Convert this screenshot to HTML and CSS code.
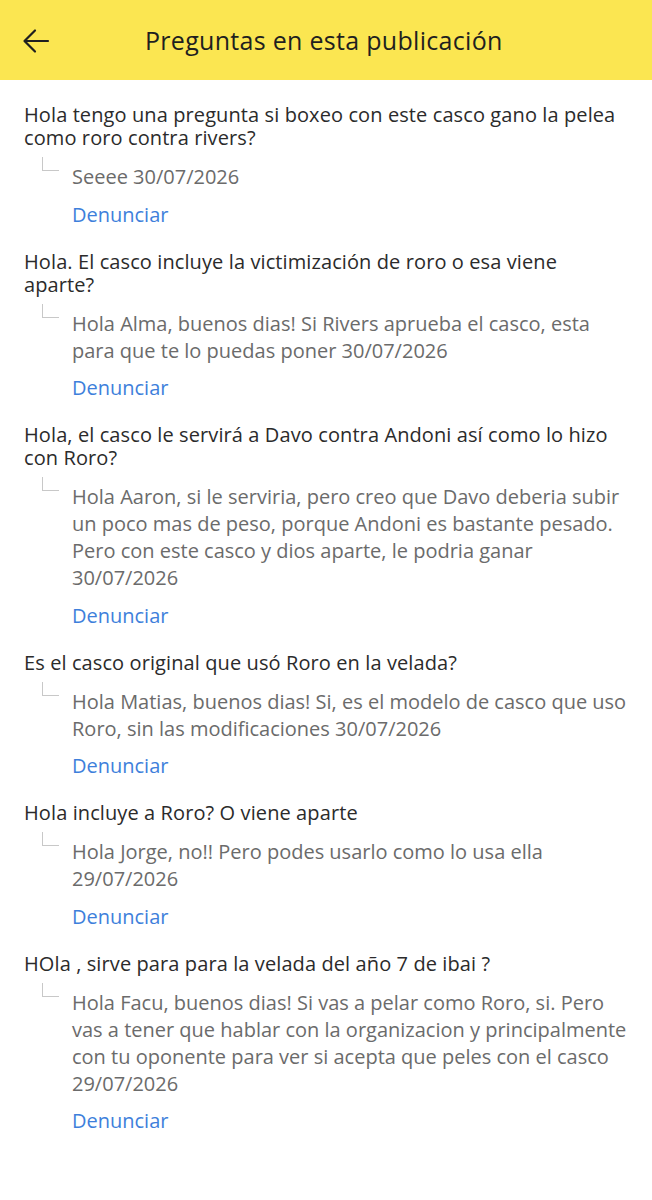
FILE: index.html
```html
<!DOCTYPE html>
<html lang="es">

<head>
  <meta charset="UTF-8" />
  <meta name="viewport" content="width=device-width, initial-scale=1" />
  <title>Preguntas en esta publicación</title>
  <link rel="stylesheet" href="styles.css">
</head>

<body>

  <header class="topbar">
    <button class="back" aria-label="Volver">
      <svg width="28" height="28" viewBox="0 0 28 28" fill="none" stroke="#1f1f1f" stroke-width="2.2" stroke-linecap="round" stroke-linejoin="round">
        <path d="M26 14H3" />
        <path d="M13 3.5L2.5 14L13 24.5" />
      </svg>
    </button>
    <h1>Preguntas en esta publicación</h1>
  </header>

  <main class="questions">

    <div class="item">
      <p class="question">Hola tengo una pregunta si boxeo con este casco gano la pelea como roro contra rivers?</p>
      <div class="answer">
        <span class="connector"></span>
        <p>Seeee 30/07/2026</p>
      </div>
      <a class="report" href="#">Denunciar</a>
    </div>

    <div class="item">
      <p class="question">Hola. El casco incluye la victimización de roro o esa viene aparte?</p>
      <div class="answer">
        <span class="connector"></span>
        <p>Hola Alma, buenos dias! Si Rivers aprueba el casco, esta para que te lo puedas poner 30/07/2026</p>
      </div>
      <a class="report" href="#">Denunciar</a>
    </div>

    <div class="item">
      <p class="question">Hola, el casco le servirá a Davo contra Andoni así como lo hizo con Roro?</p>
      <div class="answer">
        <span class="connector"></span>
        <p>Hola Aaron, si le serviria, pero creo que Davo deberia subir un poco mas de peso, porque Andoni es bastante pesado. Pero con este casco y dios aparte, le podria ganar 30/07/2026</p>
      </div>
      <a class="report" href="#">Denunciar</a>
    </div>

    <div class="item">
      <p class="question">Es el casco original que usó Roro en la velada?</p>
      <div class="answer">
        <span class="connector"></span>
        <p>Hola Matias, buenos dias! Si, es el modelo de casco que uso Roro, sin las modificaciones 30/07/2026</p>
      </div>
      <a class="report" href="#">Denunciar</a>
    </div>

    <div class="item">
      <p class="question">Hola incluye a Roro? O viene aparte</p>
      <div class="answer">
        <span class="connector"></span>
        <p>Hola Jorge, no!! Pero podes usarlo como lo usa ella 29/07/2026</p>
      </div>
      <a class="report" href="#">Denunciar</a>
    </div>

    <div class="item">
      <p class="question">HOla , sirve para para la velada del año 7 de ibai ?</p>
      <div class="answer">
        <span class="connector"></span>
        <p>Hola Facu, buenos dias! Si vas a pelar como Roro, si. Pero vas a tener que hablar con la organizacion y principalmente con tu oponente para ver si acepta que peles con el casco 29/07/2026</p>
      </div>
      <a class="report" href="#">Denunciar</a>
    </div>

  </main>

</body>

</html>
```

FILE: styles.css
```css
* {
  margin: 0;
  padding: 0;
  box-sizing: border-box;
}

body {
  background-color: #fff;
  font-family: "Open Sans", "Lato", sans-serif;
  color: #333;
}

.topbar {
  display: flex;
  align-items: center;
  height: 80px;
  padding: 0 22px;
  background-color: #fbe651;
}

.back {
  display: flex;
  background: none;
  border: none;
  padding: 0;
  margin-top: 2px;
  cursor: pointer;
}

.topbar h1 {
  margin-left: 95px;
  font-size: 25px;
  letter-spacing: 0.3px;
  font-weight: normal;
  color: #1f1f1f;
}

.questions {
  padding: 23px 24px 0 24px;
}

.item {
  margin-bottom: 22px;
}

.question {
  font-size: 20px;
  letter-spacing: 0.1px;
  line-height: 23px;
  color: #2b2b2b;
}

.answer {
  display: flex;
  margin-top: 14px;
  padding-left: 18px;
}

.connector {
  flex: none;
  width: 17px;
  height: 14px;
  margin-top: -6px;
  margin-right: 13px;
  border-left: 1px solid #c8c8c8;
  border-bottom: 1px solid #c8c8c8;
}

.answer p {
  font-size: 20px;
  line-height: 27px;
  color: #6b6b6b;
}

.report {
  display: block;
  margin-top: 10.5px;
  padding-left: 48px;
  font-size: 20px;
  line-height: 27px;
  color: #3e7fdb;
  text-decoration: none;
}
```
